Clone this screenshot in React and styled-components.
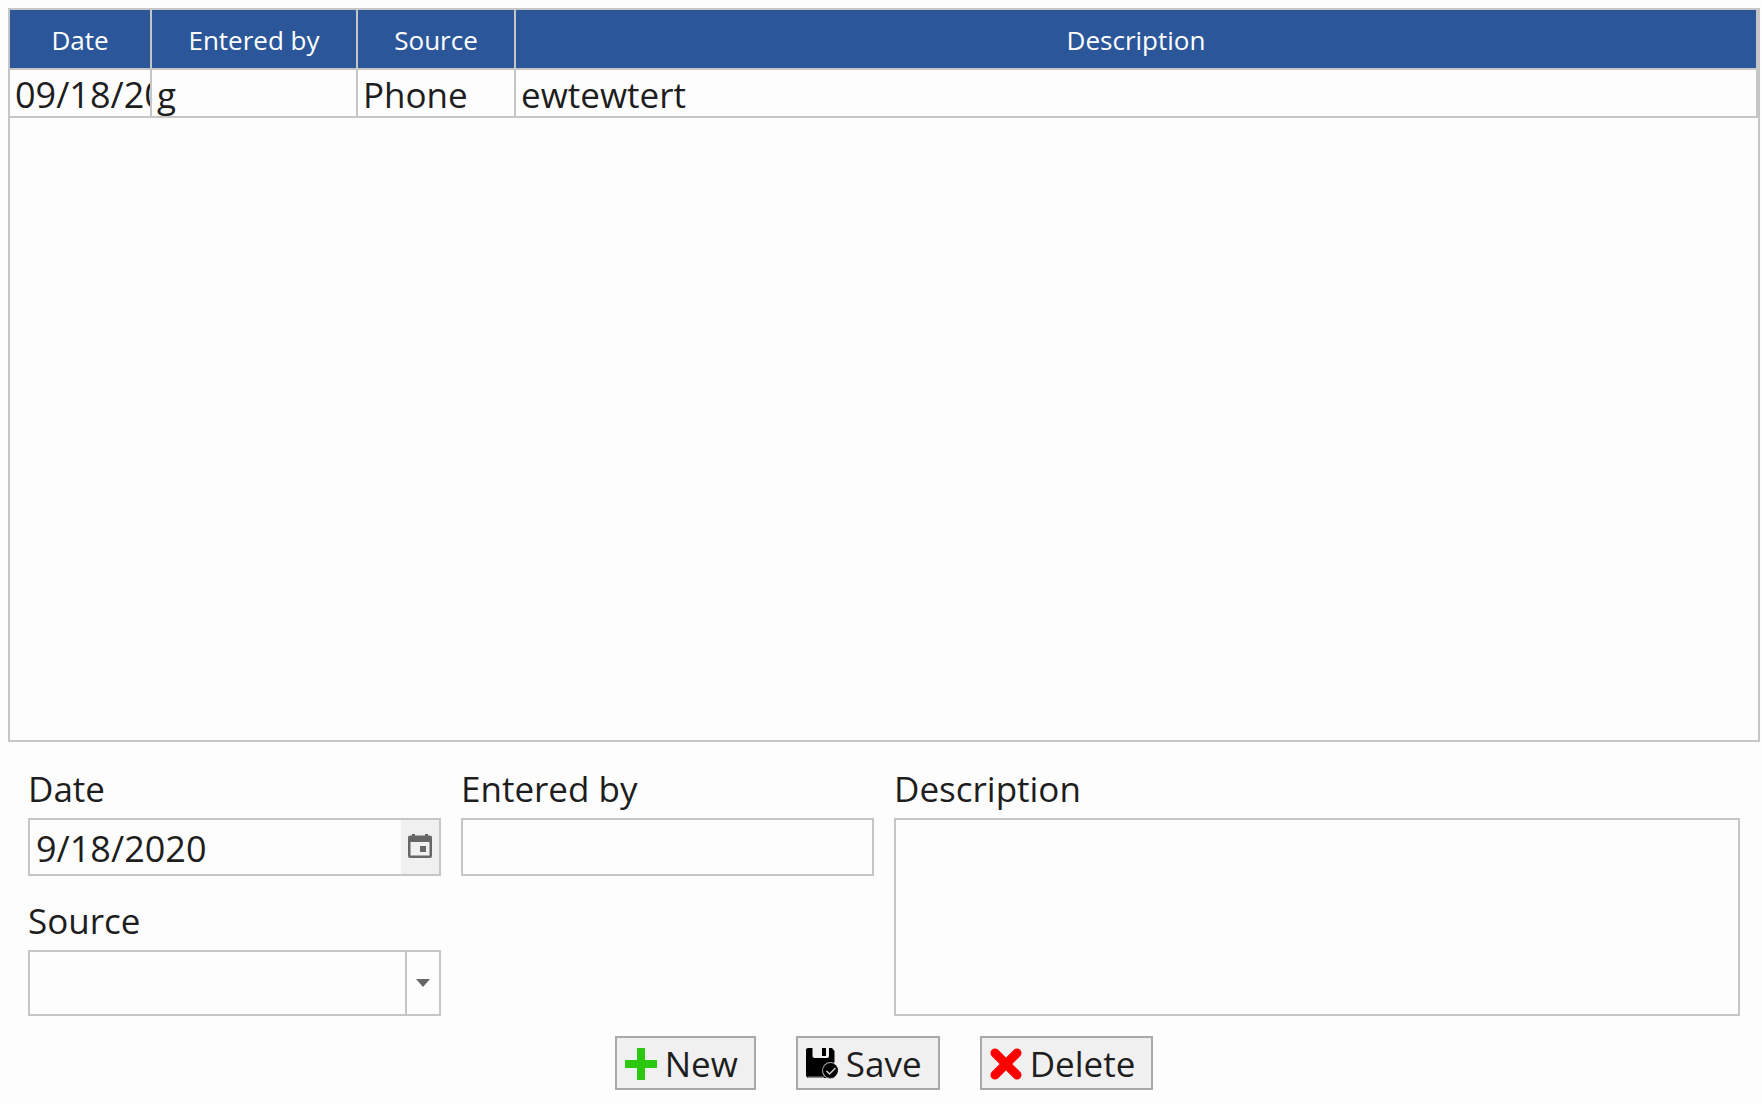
import React, { useState } from "react";
import styled, { createGlobalStyle } from "styled-components";

const columns = [
  { key: "date", title: "Date", width: "142px", numeric: true },
  { key: "enteredBy", title: "Entered by", width: "206px" },
  { key: "source", title: "Source", width: "158px" },
  { key: "description", title: "Description" },
];

const rows = [
  { id: 1, date: "09/18/2020", enteredBy: "g", source: "Phone", description: "ewtewtert" },
];

function CalendarIcon() {
  return (
    <svg width="24" height="24" viewBox="0 0 24 24" aria-hidden="true">
      <path
        fill="#666"
        fillRule="evenodd"
        d="M4 0h3v1.500h10V0h3v1.500h2a2 2 0 0 1 2 2V22a2 2 0 0 1-2 2H2a2 2 0 0 1-2-2V3.500a2 2 0 0 1 2-2h2zM2.500 8v13.500h19V8z"
      />
      <path fill="#666" d="M12 12h6v6h-6z" />
    </svg>
  );
}

function ArrowIcon() {
  return (
    <svg width="14" height="8" viewBox="0 0 14 8" aria-hidden="true">
      <path fill="#666" d="M0 0h14L7 8z" />
    </svg>
  );
}

function PlusIcon() {
  return (
    <svg width="32" height="32" viewBox="0 0 32 32" aria-hidden="true">
      <path fill="#2bc80f" d="M12 0h8v12h12v8H20v12h-8V20H0v-8h12z" />
    </svg>
  );
}

function SaveIcon() {
  return (
    <svg width="32" height="32" viewBox="0 0 32 32" aria-hidden="true">
      <path d="M2 0h24l2.500 3v27H2L0 28V2a2 2 0 0 1 2-2z" />
      <path fill="#f0f0f0" d="M6.500 0h16.500v8q0 2-2 2H8.500q-2 0-2-2z" />
      <path d="M16 0h4v8h-4z" />
      <path fill="#888" d="M2 28.500h16V30H2z" />
      <circle cx="24.500" cy="22.500" r="8.500" fill="#aaa" />
      <path fill="#f0f0f0" d="M28.500 14H33v18h-4.500z" />
      <circle cx="24.500" cy="22.500" r="7.500" />
      <path d="m20.500 23 3 3 6-6" fill="none" stroke="#ccc" strokeWidth="1.500" />
    </svg>
  );
}

function CrossIcon() {
  return (
    <svg width="32" height="32" viewBox="0 0 32 32" aria-hidden="true">
      <path d="M5 5l22 22M27 5L5 27" stroke="#f00" strokeWidth="9" strokeLinecap="round" />
    </svg>
  );
}

function App() {
  const [date, setDate] = useState("9/18/2020");

  return (
    <Page>
      <GlobalStyle />
      <GridPanel>
        <Table>
          <colgroup>
            {columns.map((column) => (
              <Column key={column.key} $width={column.width} />
            ))}
          </colgroup>
          <thead>
            <tr>
              {columns.map((column) => (
                <HeaderCell key={column.key}>{column.title}</HeaderCell>
              ))}
            </tr>
          </thead>
          <tbody>
            {rows.map((row) => (
              <tr key={row.id}>
                {columns.map((column) => (
                  <Cell key={column.key}>
                    <CellText $numeric={column.numeric}>{row[column.key]}</CellText>
                  </Cell>
                ))}
              </tr>
            ))}
          </tbody>
        </Table>
      </GridPanel>

      <Form>
        <Fields>
          <Field>
            <Label htmlFor="date">Date</Label>
            <DateBox>
              <DateInput id="date" value={date} onChange={(e) => setDate(e.target.value)} />
              <PickerButton type="button" aria-label="Open calendar">
                <CalendarIcon />
              </PickerButton>
            </DateBox>
          </Field>
          <Field>
            <Label htmlFor="source">Source</Label>
            <SelectBox>
              <Select id="source" defaultValue="">
                <option value="" />
                <option value="phone">Phone</option>
              </Select>
              <SelectArrow>
                <ArrowIcon />
              </SelectArrow>
            </SelectBox>
          </Field>
        </Fields>

        <Fields>
          <Field>
            <Label htmlFor="enteredBy">Entered by</Label>
            <TextInput id="enteredBy" />
          </Field>
        </Fields>

        <Field>
          <Label htmlFor="description">Description</Label>
          <TextArea id="description" />
        </Field>
      </Form>

      <Actions>
        <ActionButton type="button">
          <PlusIcon />
          New
        </ActionButton>
        <ActionButton type="button">
          <SaveIcon />
          Save
        </ActionButton>
        <ActionButton type="button">
          <CrossIcon />
          Delete
        </ActionButton>
      </Actions>
    </Page>
  );
}

// styled components
const GlobalStyle = createGlobalStyle`
  * {
    box-sizing: border-box;
  }

  body {
    margin: 0;
    background: #fdfdfd;
  }

  body, button, input, select, textarea {
    font-family: "Open Sans", "Noto Sans", sans-serif;
    font-size: 35px;
    color: #1e1e1e;
  }
`;

const Page = styled.div`
  min-height: 100vh;
  display: flex;
  flex-direction: column;
  padding: 8px 2px 14px 8px;
`;

const GridPanel = styled.div`
  flex: 1;
  border: 2px solid #c6c6c6;
`;

const Table = styled.table`
  width: 100%;
  table-layout: fixed;
  border-collapse: separate;
  border-spacing: 0;
`;

const Column = styled.col`
  width: ${(props) => props.$width || "auto"};
`;

const HeaderCell = styled.th`
  height: 60px;
  padding: 2px 0 0;
  background: #2b579a;
  border-right: 2px solid #c6c6c6;
  border-bottom: 2px solid #c6c6c6;
  font-size: 26px;
  line-height: 36px;
  font-weight: 400;
  color: #fff;
`;

const Cell = styled.td`
  padding: 0;
  border-right: 2px solid #c6c6c6;
  border-bottom: 2px solid #c6c6c6;
`;

const CellText = styled.div`
  height: 46px;
  padding-left: 5px;
  overflow: hidden;
  font-size: ${(props) => (props.$numeric ? "36px" : "35px")};
  line-height: 50px;
  white-space: nowrap;
`;

const Form = styled.div`
  display: grid;
  grid-template-columns: minmax(0, 413fr) minmax(0, 413fr) minmax(0, 846fr);
  gap: 20px;
  padding: 22px 20px 20px;
`;

const Fields = styled.div`
  display: flex;
  flex-direction: column;
  gap: 20px;
`;

const Field = styled.div`
  display: flex;
  flex-direction: column;
`;

const Label = styled.label`
  height: 54px;
  line-height: 50px;
`;

const TextInput = styled.input`
  width: 100%;
  height: 58px;
  padding: 0 6px;
  background: none;
  border: 2px solid #c6c6c6;
  border-radius: 0;
`;

const TextArea = styled.textarea`
  flex: 1;
  width: 100%;
  padding: 4px 6px;
  background: none;
  border: 2px solid #c6c6c6;
  border-radius: 0;
  resize: none;
`;

const DateBox = styled.div`
  display: flex;
  height: 58px;
  border: 2px solid #c6c6c6;
`;

const DateInput = styled.input`
  flex: 1;
  min-width: 0;
  padding: 2px 6px 0;
  background: none;
  border: none;
  font-size: 36px;
`;

const PickerButton = styled.button`
  width: 38px;
  padding: 0 0 2px;
  display: flex;
  align-items: center;
  justify-content: center;
  background: #f0f0f0;
  border: none;
`;

const SelectBox = styled.div`
  display: grid;
  grid-template-columns: 1fr 34px;
  height: 66px;
  border: 2px solid #c6c6c6;
`;

const Select = styled.select`
  grid-area: 1 / 1 / 2 / 3;
  appearance: none;
  padding: 0 40px 0 6px;
  background: none;
  border: none;
`;

const SelectArrow = styled.span`
  grid-area: 1 / 2 / 2 / 3;
  display: flex;
  align-items: center;
  justify-content: center;
  border-left: 2px solid #c6c6c6;
  pointer-events: none;
`;

const Actions = styled.div`
  display: flex;
  justify-content: center;
  gap: 40px;
`;

const ActionButton = styled.button`
  height: 54px;
  display: flex;
  align-items: center;
  gap: 8px;
  padding: 2px 16px 0 8px;
  background: #f0f0f0;
  border: 2px solid #a9a9a9;
  border-radius: 0;
  line-height: 48px;
`;

export default App;
